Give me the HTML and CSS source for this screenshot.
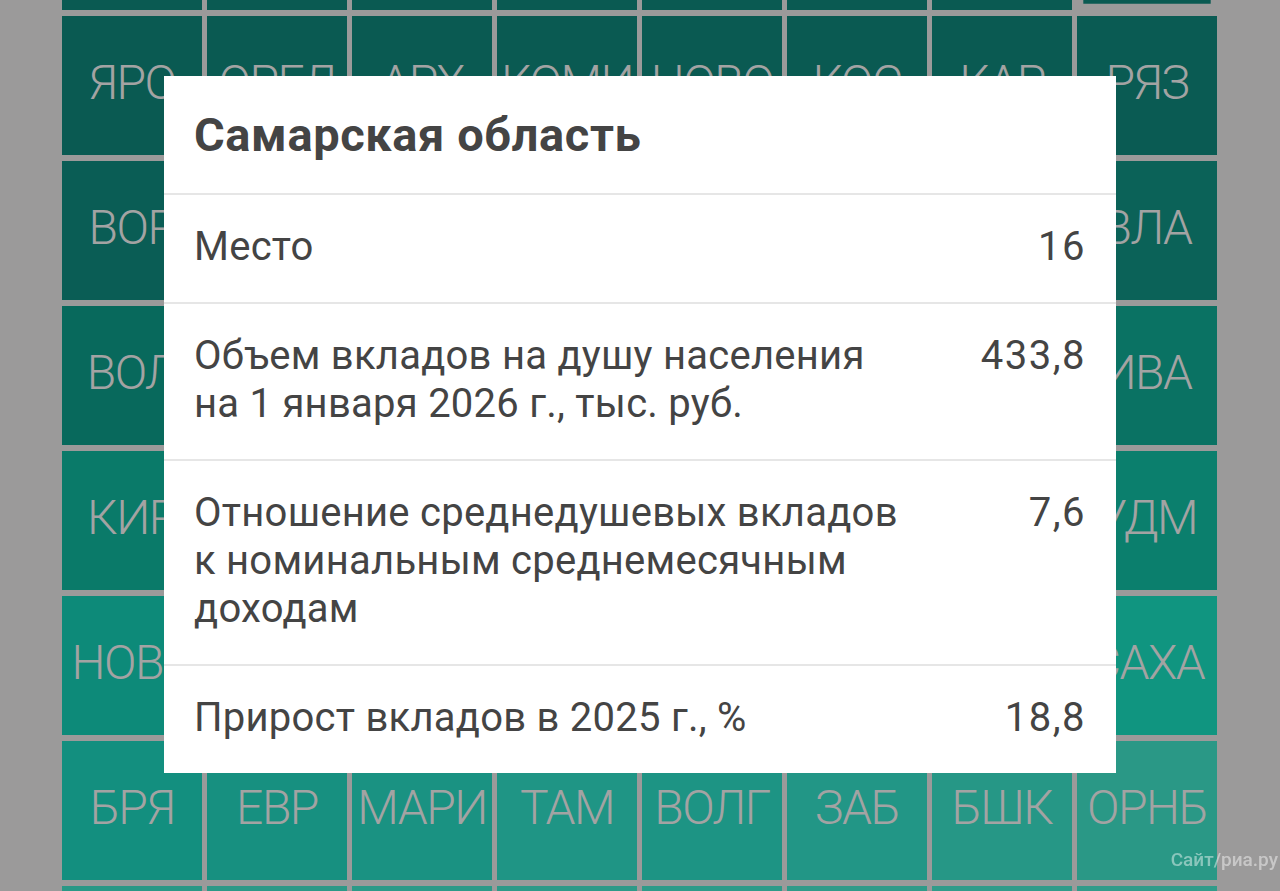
FILE: index.html
```html
<!DOCTYPE html>
<html lang="ru">
<head>
<meta charset="utf-8">
<title>Самарская область</title>
<link rel="stylesheet" href="styles.css">
</head>
<body>
<div class="grid">
  <div class="tile" style="background:#0a5a52"></div>
  <div class="tile" style="background:#0a5a52"></div>
  <div class="tile" style="background:#0a5a52"></div>
  <div class="tile" style="background:#0a5a52"></div>
  <div class="tile" style="background:#0a5a52"></div>
  <div class="tile" style="background:#0a5a52"></div>
  <div class="tile" style="background:#0a5a52"></div>
  <div class="tile pressed" style="background:#0a5a52"></div>

  <div class="tile" style="background:#0a5a52">ЯРО</div>
  <div class="tile" style="background:#0a5a52">ОРЕЛ</div>
  <div class="tile" style="background:#0a5a52">АРХ</div>
  <div class="tile" style="background:#0a5a52">КОМИ</div>
  <div class="tile" style="background:#0a5a52">НОВО</div>
  <div class="tile" style="background:#0a5a52">КОС</div>
  <div class="tile" style="background:#0a5a52">КАР</div>
  <div class="tile" style="background:#0a5b53">РЯЗ</div>

  <div class="tile" style="background:#0a5d55">ВОР</div>
  <div class="tile" style="background:#0a5e55"></div>
  <div class="tile" style="background:#0a5e56"></div>
  <div class="tile" style="background:#0a5f56"></div>
  <div class="tile" style="background:#0a5f57"></div>
  <div class="tile" style="background:#0a6057"></div>
  <div class="tile" style="background:#0b6057"></div>
  <div class="tile" style="background:#0b6258">ВЛА</div>

  <div class="tile" style="background:#08695c">ВОЛ</div>
  <div class="tile" style="background:#086a5d"></div>
  <div class="tile" style="background:#086b5e"></div>
  <div class="tile" style="background:#096c5f"></div>
  <div class="tile" style="background:#096d60"></div>
  <div class="tile" style="background:#096e61"></div>
  <div class="tile" style="background:#0a7062"></div>
  <div class="tile" style="background:#0a7263">ИВА</div>

  <div class="tile" style="background:#0a7a69">КИР</div>
  <div class="tile" style="background:#0a7b6a"></div>
  <div class="tile" style="background:#0a7b6a"></div>
  <div class="tile" style="background:#0b7c6b"></div>
  <div class="tile" style="background:#0b7d6b"></div>
  <div class="tile" style="background:#0b7e6c"></div>
  <div class="tile" style="background:#0b7e6c"></div>
  <div class="tile" style="background:#0b7f6d">УДМ</div>

  <div class="tile" style="background:#0d8a79">НОВС</div>
  <div class="tile" style="background:#0d8b79"></div>
  <div class="tile" style="background:#0e8c7a"></div>
  <div class="tile" style="background:#0e8d7b"></div>
  <div class="tile" style="background:#0f8f7c"></div>
  <div class="tile" style="background:#0f907d"></div>
  <div class="tile" style="background:#10927e"></div>
  <div class="tile" style="background:#109580">САХА</div>

  <div class="tile" style="background:#138f7f">БРЯ</div>
  <div class="tile" style="background:#179080">ЕВР</div>
  <div class="tile" style="background:#1a9282">МАРИ</div>
  <div class="tile" style="background:#1f9585">ТАМ</div>
  <div class="tile" style="background:#1d9484">ВОЛГ</div>
  <div class="tile" style="background:#229686">ЗАБ</div>
  <div class="tile" style="background:#269786">БШК</div>
  <div class="tile" style="background:#2a9886">ОРНБ</div>

  <div class="tile" style="background:#2a9886"></div>
  <div class="tile" style="background:#2b9987"></div>
  <div class="tile" style="background:#2c9a88"></div>
  <div class="tile" style="background:#2d9a88"></div>
  <div class="tile" style="background:#2e9b89"></div>
  <div class="tile" style="background:#2f9b89"></div>
  <div class="tile" style="background:#309c8a"></div>
  <div class="tile" style="background:#319c8a"></div>
</div>

<div class="overlay">
  <div class="modal">
    <div class="modal-title">Самарская область</div>
    <div class="row">
      <div class="label">Место</div>
      <div class="value">16</div>
    </div>
    <div class="row">
      <div class="label">Объем вкладов на душу населения<br>на 1 января 2026 г., тыс. руб.</div>
      <div class="value">433,8</div>
    </div>
    <div class="row">
      <div class="label">Отношение среднедушевых вкладов<br>к номинальным среднемесячным<br>доходам</div>
      <div class="value">7,6</div>
    </div>
    <div class="row">
      <div class="label">Прирост вкладов в 2025 г., %</div>
      <div class="value">18,8</div>
    </div>
  </div>
</div>

<div class="watermark">Сайт/риа.ру</div>
</body>
</html>
```

FILE: styles.css
```css
html, body {
  margin: 0;
  padding: 0;
  width: 1280px;
  height: 891px;
  overflow: hidden;
  background: #9b9a9a;
  font-family: Roboto, "Noto Sans", sans-serif;
}

.grid {
  display: grid;
  grid-template-columns: repeat(8, 140px);
  grid-auto-rows: 139px;
  column-gap: 5px;
  row-gap: 6px;
  padding-left: 62px;
  margin-top: -129px;
}

.tile {
  display: flex;
  align-items: center;
  justify-content: center;
  padding-bottom: 7px;
  box-sizing: border-box;
  color: #a3a3a3;
  font-weight: 300;
  font-size: 48px;
  letter-spacing: -1.5px;
  white-space: nowrap;
}

.tile.pressed {
  transform: scale(0.91);
}

.overlay {
  position: fixed;
  inset: 0;
  display: flex;
  justify-content: center;
  align-items: flex-start;
  padding-top: 76px;
}

.modal {
  width: 952px;
  background: #ffffff;
  color: #444444;
}

.modal-title {
  font-weight: 700;
  font-size: 47px;
  letter-spacing: 0.6px;
  line-height: 117px;
  padding-left: 30px;
  border-bottom: 2px solid #e6e6e6;
}

.row {
  display: flex;
  justify-content: space-between;
  align-items: flex-start;
  padding: 28px 30px 31px 30px;
  font-size: 40px;
  line-height: 48px;
  letter-spacing: 0.25px;
  border-bottom: 2px solid #e6e6e6;
}

.row:last-child {
  border-bottom: none;
}

.label {
  white-space: nowrap;
}

.value {
  white-space: nowrap;
  text-align: right;
  letter-spacing: 1.5px;
}

.watermark {
  position: fixed;
  right: 2px;
  bottom: 20px;
  font-size: 19px;
  font-weight: 500;
  color: rgba(255, 255, 255, 0.45);
}
```
